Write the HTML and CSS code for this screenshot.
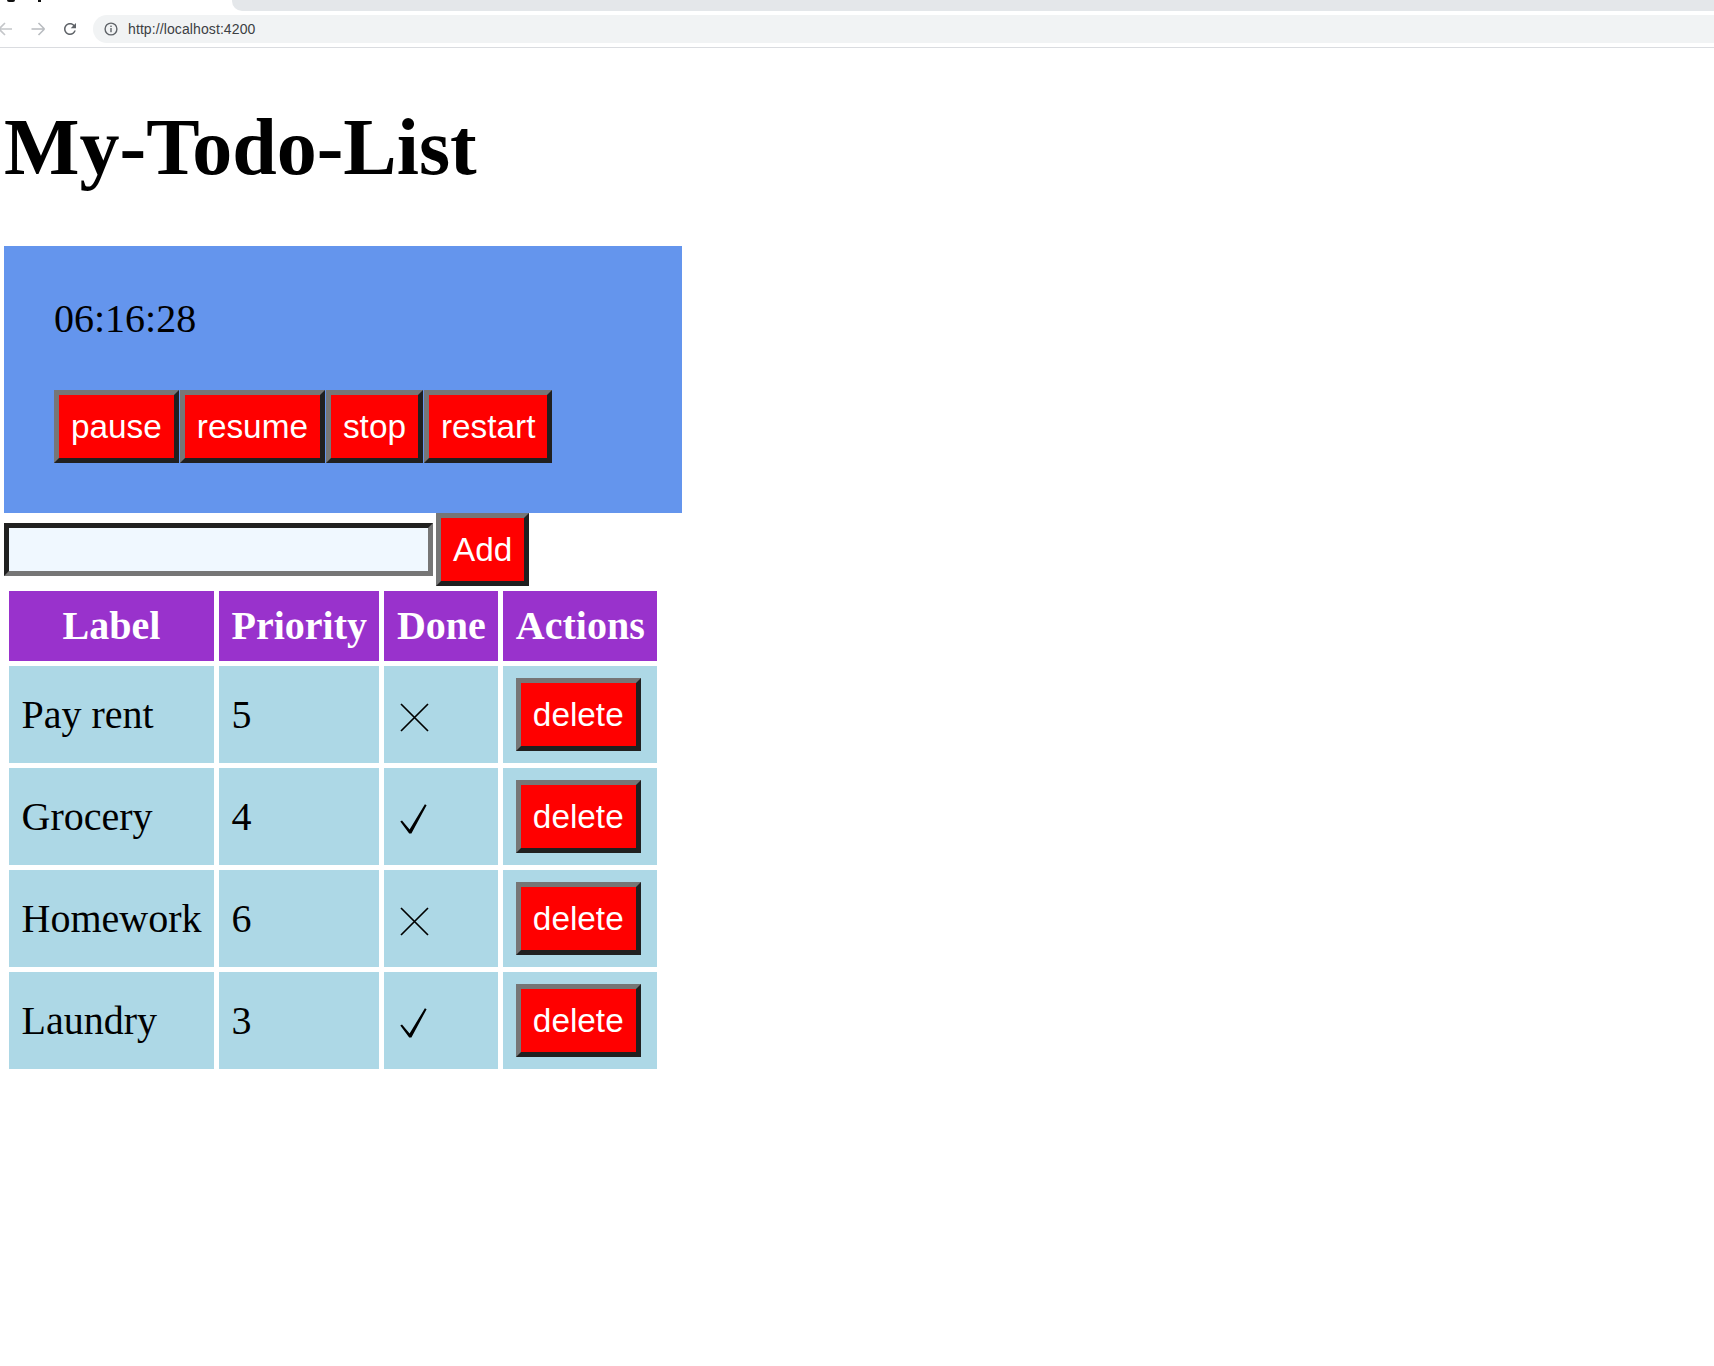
FILE: index.html
```html
<!DOCTYPE html>
<html lang="en">
<head>
<meta charset="utf-8">
<title>My-Todo-List</title>
<link rel="stylesheet" href="styles.css">
</head>
<body>
<header class="browser">
  <div class="tabstrip">
    <div class="tab-left">
      <span class="mark mark-a"></span>
      <span class="mark mark-b"></span>
    </div>
    <div class="tabbar"></div>
  </div>
  <div class="toolbar">
    <svg class="nav-icon back" width="16" height="16" viewBox="0 0 16 16"><path d="M3 8H16M3 8L9 2M3 8L9 14" fill="none" stroke="#c4c6c9" stroke-width="1.6"/></svg>
    <svg class="nav-icon fwd" width="16" height="16" viewBox="0 0 16 16"><path d="M1.5 8H14.5M14.5 8L8.5 2M14.5 8L8.5 14" fill="none" stroke="#b9bcc0" stroke-width="1.6"/></svg>
    <svg class="nav-icon reload" width="18" height="18" viewBox="0 0 24 24"><path d="M17.65 6.35C16.2 4.9 14.21 4 12 4c-4.42 0-7.99 3.58-7.99 8s3.570 8 7.99 8c3.73 0 6.84-2.55 7.73-6h-2.08c-.82 2.33-3.04 4-5.650 4-3.31 0-6-2.69-6-6s2.69-6 6-6c1.66 0 3.14.69 4.22 1.78L13 11h7V4l-2.35 2.35z" fill="#5f6368"/></svg>
    <div class="omnibox">
      <svg class="info" width="14" height="14" viewBox="0 0 14 14"><circle cx="7" cy="7" r="5.9" fill="none" stroke="#5f6368" stroke-width="1.4"/><rect x="6.3" y="6" width="1.4" height="4.2" fill="#5f6368"/><rect x="6.3" y="3.6" width="1.4" height="1.4" fill="#5f6368"/></svg>
      <span class="url">http://localhost:4200</span>
    </div>
  </div>
</header>

<main class="page">
  <h1 class="title">My-Todo-List</h1>

  <section class="timer">
    <div class="clock">06:16:28</div>
    <div class="controls">
      <button class="btn">pause</button>
      <button class="btn">resume</button>
      <button class="btn">stop</button>
      <button class="btn">restart</button>
    </div>
  </section>

  <form class="add-row">
    <input class="field" type="text">
    <button class="btn" type="button">Add</button>
  </form>

  <table class="todos">
    <thead>
      <tr><th>Label</th><th>Priority</th><th>Done</th><th>Actions</th></tr>
    </thead>
    <tbody>
      <tr>
        <td>Pay rent</td><td>5</td>
        <td><svg class="mark-icon" width="30" height="30" viewBox="0 0 30 30"><path d="M2 2L29 29M29 2L2 29" stroke="#000" stroke-width="1.7" fill="none"/></svg></td>
        <td><button class="btn">delete</button></td>
      </tr>
      <tr>
        <td>Grocery</td><td>4</td>
        <td><svg class="mark-icon" width="30" height="30" viewBox="0 0 30 30"><path d="M1.3 17.6L3 16.4L10.6 25.6L25.9 0.2L27.6 1.2L12.4 29.6L10.2 29.6Z" fill="#000"/></svg></td>
        <td><button class="btn">delete</button></td>
      </tr>
      <tr>
        <td>Homework</td><td>6</td>
        <td><svg class="mark-icon" width="30" height="30" viewBox="0 0 30 30"><path d="M2 2L29 29M29 2L2 29" stroke="#000" stroke-width="1.7" fill="none"/></svg></td>
        <td><button class="btn">delete</button></td>
      </tr>
      <tr>
        <td>Laundry</td><td>3</td>
        <td><svg class="mark-icon" width="30" height="30" viewBox="0 0 30 30"><path d="M1.3 17.6L3 16.4L10.6 25.6L25.9 0.2L27.6 1.2L12.4 29.6L10.2 29.6Z" fill="#000"/></svg></td>
        <td><button class="btn">delete</button></td>
      </tr>
    </tbody>
  </table>
</main>
</body>
</html>
```

FILE: styles.css
```css
html, body {
  margin: 0;
  padding: 0;
  background: #ffffff;
}

body {
  font-family: "Liberation Serif", "Times New Roman", serif;
  font-size: 40px;
  line-height: 46px;
  color: #000;
}

/* ---------- browser chrome ---------- */
.browser {
  font-family: "Liberation Sans", Arial, sans-serif;
}

.tabstrip {
  display: flex;
  height: 11px;
}

.tab-left {
  width: 232px;
  display: flex;
  align-items: flex-start;
}

.mark {
  display: block;
  height: 2px;
  background: #111;
}

.mark-a {
  width: 8px;
  margin-left: 7px;
  border-radius: 0 0 3px 3px;
}

.mark-b {
  width: 3px;
  margin-left: 23px;
}

.tabbar {
  flex: 1;
  background: #e4e7ea;
  border-bottom-left-radius: 10px;
}

.toolbar {
  height: 36px;
  display: flex;
  align-items: center;
  border-bottom: 1px solid #dadce0;
}

.nav-icon {
  display: block;
  flex: none;
}

.back {
  margin-left: -4px;
}

.fwd {
  margin-left: 18px;
}

.reload {
  margin-left: 15px;
}

.omnibox {
  flex: 1;
  height: 28px;
  margin-left: 14px;
  background: #f1f3f4;
  border-radius: 14px 0 0 14px;
  display: flex;
  align-items: center;
  padding-left: 11px;
}

.info {
  display: block;
  flex: none;
}

.url {
  margin-left: 10px;
  font-size: 14px;
  color: #3c4043;
  letter-spacing: 0.1px;
}

/* ---------- page ---------- */
.page {
  padding-left: 4px;
}

.title {
  font-size: 80px;
  line-height: 92px;
  font-weight: bold;
  margin: 53px 0 53px 0;
}

.timer {
  width: 628px;
  background: #6495ed;
  padding: 50px 0 50px 50px;
}

.clock {
  font-size: 40px;
  line-height: 46px;
  margin-bottom: 48px;
}

.controls {
  display: flex;
  gap: 1px;
}

.btn {
  font-family: "Liberation Sans", Arial, sans-serif;
  font-size: 33.33px;
  line-height: 38px;
  padding: 12.5px 12px;
  margin: 0;
  border: 5px solid;
  border-color: #767676 #202020 #202020 #767676;
  background: #ff0000;
  color: #ffffff;
  border-radius: 0;
}

.add-row {
  display: flex;
  align-items: center;
  gap: 3px;
  margin: 0;
}

.field {
  box-sizing: border-box;
  width: 429px;
  height: 53px;
  margin: 0;
  padding: 0 5px;
  border: 5px solid;
  border-color: #202020 #767676 #767676 #202020;
  background: #f0f8ff;
  font-family: "Liberation Sans", Arial, sans-serif;
  font-size: 33.33px;
}

.todos {
  border-collapse: separate;
  border-spacing: 5px;
  margin: 0;
  font-size: 40px;
}

.todos th,
.todos td {
  padding: 12px 12.5px;
  line-height: 46px;
  vertical-align: middle;
}

.todos th {
  background: #9932cc;
  color: #ffffff;
  font-weight: bold;
  text-align: center;
}

.todos td {
  background: #add8e6;
  text-align: left;
}

.mark-icon {
  vertical-align: -4px;
  margin-left: 2px;
}
```
